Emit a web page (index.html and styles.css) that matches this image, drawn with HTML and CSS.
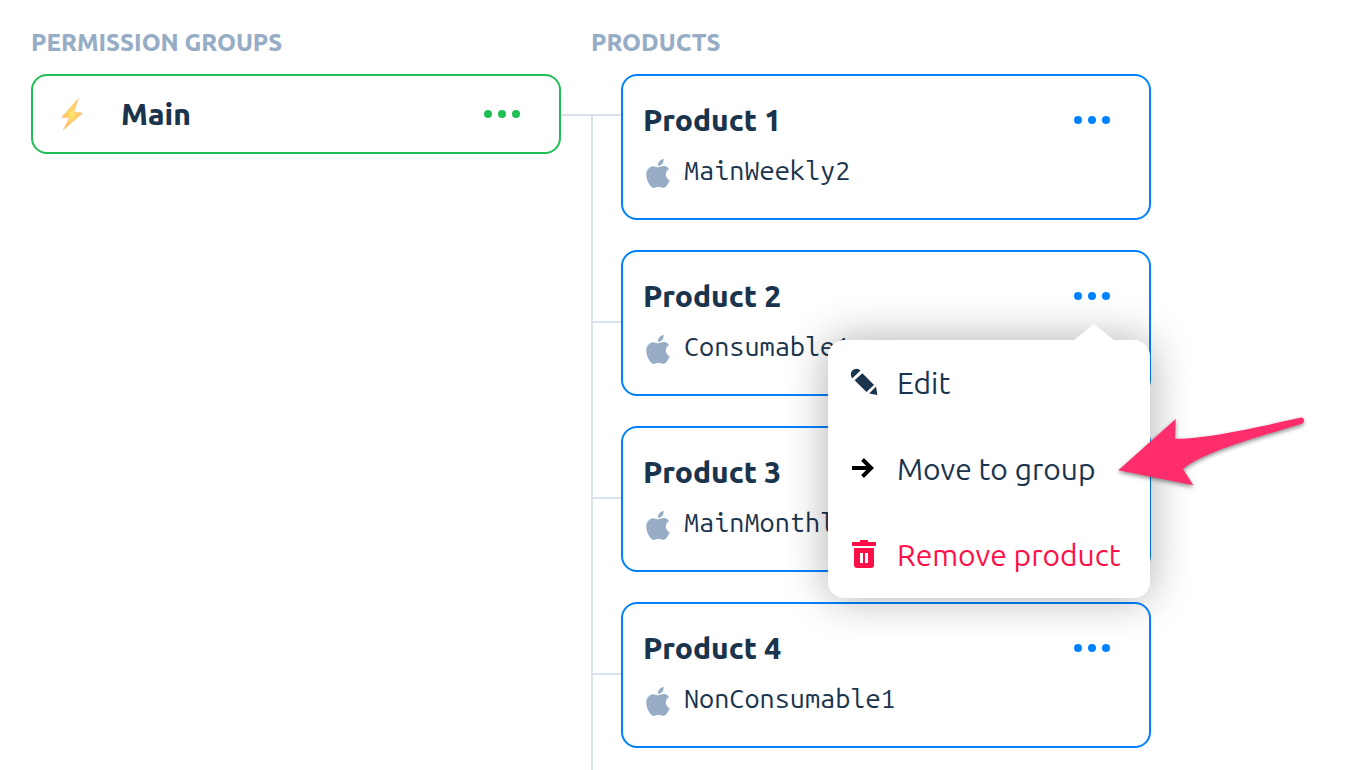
FILE: index.html
```html
<!DOCTYPE html>
<html lang="en">
<head>
<meta charset="utf-8">
<title>Permission groups and products</title>
<link rel="stylesheet" href="styles.css">
</head>
<body>
<svg class="sprite" aria-hidden="true">
  <symbol id="dots" viewBox="0 0 36 8"><circle cx="4" cy="4" r="4"/><circle cx="18" cy="4" r="4"/><circle cx="32" cy="4" r="4"/></symbol>
  <symbol id="apple" viewBox="2 0 20 24"><path d="M12.152 6.896c-.948 0-2.415-1.078-3.96-1.04-2.04.027-3.91 1.183-4.961 3.014-2.117 3.675-.546 9.103 1.519 12.09 1.013 1.454 2.208 3.09 3.792 3.039 1.52-.065 2.09-.987 3.935-.987 1.831 0 2.35.987 3.96.948 1.637-.026 2.676-1.48 3.676-2.948 1.156-1.688 1.636-3.325 1.662-3.415-.039-.013-3.182-1.221-3.22-4.857-.026-3.04 2.48-4.494 2.597-4.559-1.429-2.09-3.623-2.324-4.39-2.376-2-.156-3.675 1.09-4.61 1.09zM15.53 3.83c.843-1.012 1.4-2.427 1.245-3.83-1.207.052-2.662.805-3.532 1.818-.78.896-1.454 2.338-1.273 3.714 1.338.104 2.715-.688 3.559-1.701"/></symbol>
</svg>
<main class="board">
  <section class="column">
    <h2 class="heading">PERMISSION GROUPS</h2>
    <article class="group">
      <svg class="bolt" viewBox="0 0 24 34" aria-hidden="true">
        <defs><radialGradient id="spark"><stop offset="0" stop-color="#ffe56e"/><stop offset="1" stop-color="#fdb94f"/></radialGradient></defs>
        <path d="M18.500 1.500 1.500 20.500l8 .4L3.200 33 22.500 16.200l-8.700-1.400z" fill="url(#spark)" stroke="#fdd0a0" stroke-width="1" stroke-linejoin="round"/>
      </svg>
      <h3 class="name">Main</h3>
      <button class="more more-green" type="button" aria-label="Main options"><svg class="dots"><use href="#dots"/></svg></button>
    </article>
  </section>
  <section class="column column-products">
    <h2 class="heading">PRODUCTS</h2>
    <ul class="products">
      <li class="product">
        <div class="top"><h3 class="name">Product 1</h3><button class="more" type="button" aria-label="Product 1 options"><svg class="dots"><use href="#dots"/></svg></button></div>
        <p class="sku"><svg class="apple" aria-hidden="true"><use href="#apple"/></svg>MainWeekly2</p>
      </li>
      <li class="product">
        <div class="top"><h3 class="name">Product 2</h3><button class="more" type="button" aria-label="Product 2 options" aria-expanded="true"><svg class="dots"><use href="#dots"/></svg></button></div>
        <p class="sku"><svg class="apple" aria-hidden="true"><use href="#apple"/></svg>Consumable1</p>
        <div class="menu">
          <button class="item" type="button">
            <span class="icon"><svg width="28" height="28" viewBox="0 0 28 28" fill="currentColor"><path d="M2.400 10.300A5.600 5.600 0 1 1 10.500 2.500zM12.400 5.200 24 17l-7.500 7L4.600 12.300zM26 18.500 27.400 27l-8.200-1.500z"/></svg></span>Edit
          </button>
          <button class="item" type="button">
            <span class="icon icon-arrow"><svg width="22" height="20" viewBox="0 0 22 20" fill="none" stroke="#000" stroke-width="4"><path d="M0 10h19M10.500 1.500 19.200 10l-8.700 8.500"/></svg></span>Move to group
          </button>
          <button class="item item-danger" type="button">
            <span class="icon"><svg width="24" height="28" viewBox="0 0 24 28" fill="currentColor"><path d="M8 0h8v2h8v4H0V2h8z"/><path fill-rule="evenodd" d="M2 8h20v17a3 3 0 0 1-3 3H5a3 3 0 0 1-3-3zM8 13v10h3V13zM13 13v10h3V13z"/></svg></span>Remove product
          </button>
          <svg class="pointer" width="187" height="70" viewBox="0 0 187 70" aria-hidden="true"><path d="M.3 53.300 57.700 2 57 21.700C90 22 145 9 183 .5c3-.5 4.500 4.500 1 6.200C140 20 83 36 65 52l10.300 16.300z" fill="#ff2d6c"/></svg>
        </div>
      </li>
      <li class="product">
        <div class="top"><h3 class="name">Product 3</h3><button class="more" type="button" aria-label="Product 3 options"><svg class="dots"><use href="#dots"/></svg></button></div>
        <p class="sku"><svg class="apple" aria-hidden="true"><use href="#apple"/></svg>MainMonthly</p>
      </li>
      <li class="product">
        <div class="top"><h3 class="name">Product 4</h3><button class="more" type="button" aria-label="Product 4 options"><svg class="dots"><use href="#dots"/></svg></button></div>
        <p class="sku"><svg class="apple" aria-hidden="true"><use href="#apple"/></svg>NonConsumable1</p>
      </li>
    </ul>
  </section>
</main>
</body>
</html>
```

FILE: styles.css
```css
* { box-sizing: border-box; }
body {
  margin: 0;
  background: #fff;
  color: #1a344d;
  font-family: Ubuntu, "Noto Sans", sans-serif;
}
h2, h3, p, ul { margin: 0; padding: 0; }
button { padding: 0; border: 0; background: none; color: inherit; font: inherit; cursor: pointer; }
svg { display: block; flex: none; }
.sprite { position: absolute; width: 0; height: 0; }

.board {
  display: grid;
  grid-template-columns: 53fr 56fr;
  gap: 30px;
  max-width: 1151px;
  min-height: 100vh;
  padding: 28px 0 0 31px;
}
.column { display: flex; flex-direction: column; }
.heading { margin-bottom: 16px; font-size: 24px; line-height: 30px; font-weight: 800; color: #97adc6; }
.name { font-size: 30px; line-height: 40px; font-weight: 800; }

.group {
  position: relative;
  display: flex;
  align-items: center;
  height: 80px;
  padding: 0 39px 0 27px;
  border: 2px solid #20bf55;
  border-radius: 16px;
}
.group::after {
  content: "";
  position: absolute;
  top: 38px;
  left: 100%;
  width: 60px;
  height: 2px;
  margin-left: 2px;
  background: #d9e3ed;
}
.bolt { width: 24px; height: 34px; margin-right: 37px; }
.more { margin-left: auto; padding: 10px 0; color: #0082ff; }
.more-green { color: #20bf55; }
.dots { width: 36px; height: 8px; fill: currentColor; }

.products {
  position: relative;
  flex: 1;
  display: flex;
  flex-direction: column;
  gap: 30px;
  padding-left: 30px;
  list-style: none;
}
.products::before {
  content: "";
  position: absolute;
  top: 40px;
  bottom: 0;
  left: 0;
  width: 2px;
  background: #d9e3ed;
}
.product {
  position: relative;
  padding: 24px 39px 32px 20px;
  border: 2px solid #0082ff;
  border-radius: 16px;
}
.product + .product::before {
  content: "";
  position: absolute;
  top: 69px;
  right: 100%;
  width: 28px;
  height: 2px;
  margin-right: 2px;
  background: #d9e3ed;
}
.top { display: flex; align-items: center; margin-bottom: 15px; }
.sku {
  display: flex;
  align-items: flex-start;
  gap: 14px;
  height: 31px;
  padding-left: 3px;
  font-family: "Ubuntu Mono", "Liberation Mono", monospace;
  font-size: 27px;
  line-height: 30px;
}
.apple { align-self: flex-end; width: 24px; height: 29px; margin-bottom: -2px; fill: #97adc6; }

.menu {
  position: absolute;
  z-index: 1;
  top: 88px;
  right: -1px;
  width: 322px;
  border-radius: 16px;
  background: #fff;
  box-shadow: 0 0 44px rgba(0, 0, 0, 0.32);
}
.menu::before {
  content: "";
  position: absolute;
  right: 36px;
  bottom: 100%;
  border: 20px solid transparent;
  border-top: 0;
  border-bottom: 16px solid #fff;
}
.item { display: flex; align-items: center; width: 100%; height: 86px; padding: 0 22px; font-size: 30px; text-align: left; white-space: nowrap; }
.item-danger { color: #ff0f47; }
.icon { display: flex; flex: none; justify-content: center; width: 28px; margin-right: 19px; padding-bottom: 2px; }
.icon-arrow { justify-content: flex-start; padding-left: 2px; }
.pointer { position: absolute; top: 77px; left: 290px; overflow: visible; filter: drop-shadow(0 2px 2px rgba(0, 0, 0, 0.45)); }
```
